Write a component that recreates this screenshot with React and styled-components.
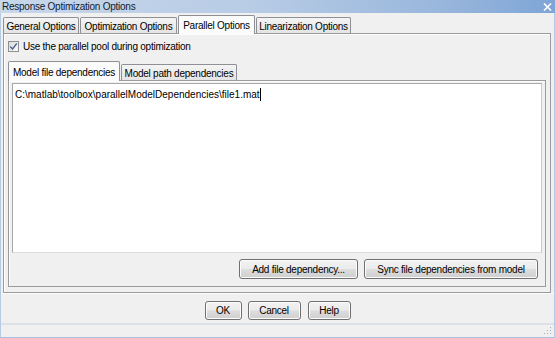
import styled, { createGlobalStyle } from "styled-components"

const Global = createGlobalStyle`
    html, body {
        margin: 0;
        padding: 0;
        background: #f0f0f0;
    }
    body {
        font-family: "Liberation Sans", Arial, sans-serif;
        font-size: 10px;
        letter-spacing: -0.25px;
        color: #000;
    }
`

const topTabs = [
    { label: "General Options", w: 76 },
    { label: "Optimization Options", w: 97 },
    { label: "Parallel Options", w: 77, active: true },
    { label: "Linearization Options", w: 95 },
]

export default function App(){

    return(
        <>
            <Global />
            <Window>
                <TitleBar>
                    <span>Response Optimization Options</span>
                    <svg width="9" height="8" viewBox="0 0 9 8">
                        <path d="M1 0.5 L8 7.5 M8 0.5 L1 7.5" stroke="#fff" strokeWidth="1.6" />
                    </svg>
                </TitleBar>

                <Content>
                    <TabStrip>
                        {topTabs.map(t => (
                            <Tab key={t.label} $w={t.w} $active={t.active}>{t.label}</Tab>
                        ))}
                    </TabStrip>

                    <Panel>
                        <CheckRow>
                            <CheckBox>
                                <svg width="9" height="9" viewBox="0 0 9 9">
                                    <path d="M1.2 4.6 L3.5 7 L7.8 1.4" stroke="#55688f" strokeWidth="1.5" fill="none" />
                                </svg>
                            </CheckBox>
                            <span>Use the parallel pool during optimization</span>
                        </CheckRow>

                        <InnerTabStrip>
                            <InnerTab $w={112} $active>Model file dependencies</InnerTab>
                            <InnerTab $w={116}>Model path dependencies</InnerTab>
                        </InnerTabStrip>

                        <InnerPanel>
                            <Field>
                                C:\matlab\toolbox\parallelModelDependencies\file1.mat<Caret />
                            </Field>
                            <ActionRow>
                                <Button $w={119}>Add file dependency...</Button>
                                <Button $w={174}>Sync file dependencies from model</Button>
                            </ActionRow>
                        </InnerPanel>
                    </Panel>
                </Content>

                <Footer>
                    <Button $w={37} $h={19}>OK</Button>
                    <Button $w={53} $h={19}>Cancel</Button>
                    <Button $w={43} $h={19} style={{marginLeft: "1px"}}>Help</Button>
                </Footer>

                <StatusBar>
                    <svg width="8" height="8" viewBox="0 0 8 8">
                        <g fill="#a8afb8">
                            <rect x="6" y="0" width="1" height="1" />
                            <rect x="3" y="3" width="1" height="1" />
                            <rect x="6" y="3" width="1" height="1" />
                            <rect x="0" y="6" width="1" height="1" />
                            <rect x="3" y="6" width="1" height="1" />
                            <rect x="6" y="6" width="1" height="1" />
                        </g>
                    </svg>
                </StatusBar>
            </Window>
        </>
    )
}

const Window = styled.div`
    width: 555px;
    height: 338px;
    box-sizing: border-box;
    display: flex;
    flex-direction: column;
    background: #f0f0f0;
    border-left: 1px solid #b6cae4;
    border-right: 1px solid #b6cae4;
    border-bottom: 1px solid #a9c0de;
`

const TitleBar = styled.div`
    height: 13px;
    flex-shrink: 0;
    display: flex;
    align-items: center;
    justify-content: space-between;
    padding: 0 3px 0 2px;
    margin: 0 -1px;
    background: linear-gradient(to right, #c8d7ea 0%, #b8cce6 45%, #98b6dc 80%, #7ea5d6 100%);
    color: #0f1b2e;
    line-height: 13px;
`

const Content = styled.div`
    padding: 2px 3px 0 2px;
    display: flex;
    flex-direction: column;
`

const TabStrip = styled.div`
    display: flex;
    align-items: flex-end;
    gap: 1px;
    height: 19px;
    margin-bottom: -1px;
    position: relative;
    z-index: 1;
`

const Tab = styled.div`
    box-sizing: border-box;
    width: ${p => p.$w}px;
    height: ${p => p.$active ? 19 : 16}px;
    margin-bottom: ${p => p.$active ? 0 : 1}px;
    padding-top: ${p => p.$active ? 3 : 2}px;
    line-height: 14px;
    text-align: center;
    white-space: nowrap;
    border: 1px solid #8e9096;
    border-bottom: none;
    border-radius: 2px 2px 0 0;
    background: ${p => p.$active ? "#fbfbfb" : "linear-gradient(#f4f4f4, #e4e4e4)"};
`

const Panel = styled.div`
    box-sizing: border-box;
    height: 260px;
    border: 1px solid #9b9b9b;
    box-shadow: inset 1px 1px 0 #fdfdfd;
    background: #f0f0f0;
    padding: 6px 4px 5px;
    display: flex;
    flex-direction: column;
`

const CheckRow = styled.label`
    display: flex;
    align-items: center;
    gap: 4px;
    height: 13px;
    line-height: 13px;
`

const CheckBox = styled.span`
    box-sizing: border-box;
    width: 11px;
    height: 11px;
    border: 1px solid #8f8f8f;
    background: linear-gradient(135deg, #dcdcdc, #fbfbfb);
    display: flex;
    align-items: center;
    justify-content: center;
`

const InnerTabStrip = styled.div`
    display: flex;
    align-items: flex-end;
    gap: 1px;
    height: 20px;
    margin-top: 8px;
    margin-bottom: -1px;
    position: relative;
    z-index: 1;
`

const InnerTab = styled(Tab)`
    height: ${p => p.$active ? 20 : 16}px;
    padding-top: ${p => p.$active ? 4 : 2}px;
`

const InnerPanel = styled.div`
    flex: 1;
    border: 1px solid #9b9b9b;
    box-shadow: inset 1px 1px 0 #fdfdfd;
    padding: 2px 3px 7px;
    display: flex;
    flex-direction: column;
`

const Field = styled.div`
    box-sizing: border-box;
    height: 170px;
    background: #fff;
    border: 1px solid #a8a8a8;
    border-right-color: #c9c9c9;
    border-bottom-color: #dcdcdc;
    padding: 4px 2px;
    line-height: 13px;
    letter-spacing: 0;
    white-space: nowrap;
`

const Caret = styled.span`
    display: inline-block;
    width: 1px;
    height: 13px;
    background: #000;
    vertical-align: top;
`

const ActionRow = styled.div`
    display: flex;
    justify-content: flex-end;
    gap: 6px;
    margin-top: 6px;
    padding-right: 4px;
`

const Button = styled.button`
    box-sizing: border-box;
    width: ${p => p.$w}px;
    height: ${p => p.$h || 20}px;
    padding: 0;
    font: inherit;
    letter-spacing: inherit;
    color: #000;
    border: 1px solid #707070;
    border-radius: 3px;
    background: linear-gradient(#f2f2f2 0%, #ebebeb 48%, #dddddd 52%, #cfcfcf 100%);
    box-shadow: inset 0 0 0 1px #fcfcfc;
`

const Footer = styled.div`
    height: 30px;
    flex-shrink: 0;
    box-sizing: border-box;
    padding-top: 7px;
    display: flex;
    justify-content: center;
    gap: 6px;
    border-top: 1px solid #fcfcfc;
`

const StatusBar = styled.div`
    flex: 1;
    border-top: 2px solid #dde2e9;
    display: flex;
    justify-content: flex-end;
    align-items: flex-end;
    padding: 0 2px 2px 0;
`
